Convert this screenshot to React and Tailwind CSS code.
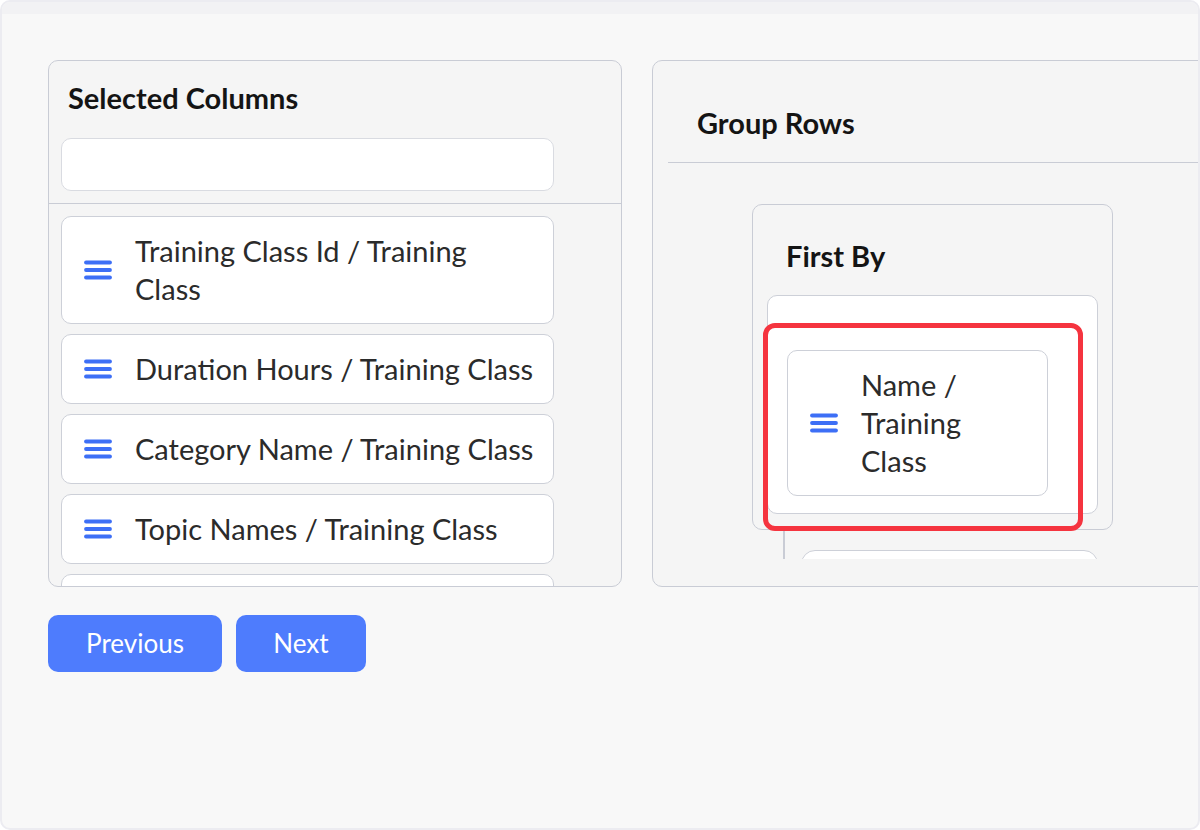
import React from "react";

const font = { fontFamily: "Lato, 'Open Sans', 'Liberation Sans', sans-serif" };

function DragHandle() {
  return (
    <svg width="28" height="20" viewBox="0 0 28 20" className="shrink-0">
      <g stroke="#3d6ff6" strokeWidth="3.8" strokeLinecap="round">
        <line x1="2" y1="2.5" x2="26" y2="2.5" />
        <line x1="2" y1="10" x2="26" y2="10" />
        <line x1="2" y1="17.5" x2="26" y2="17.5" />
      </g>
    </svg>
  );
}

function ColumnItem({ label }) {
  return (
    <div className="w-[493px] shrink-0 flex items-center gap-[23px] bg-white border border-[#cdd0d8] rounded-[10px] pl-[22px] pr-[17px] py-[15px]">
      <DragHandle />
      <span className="text-[29px] leading-[38px] text-[#2b2b2b]">{label}</span>
    </div>
  );
}

const columns = [
  "Training Class Id / Training Class",
  "Duration Hours / Training Class",
  "Category Name / Training Class",
  "Topic Names / Training Class",
  "Start Date / Training Class",
];

export default function App() {
  return (
    <div
      style={font}
      className="w-[1200px] h-[830px] overflow-hidden rounded-[10px] border-2 border-[#ececf1] bg-[#f8f8f8] flex flex-col"
    >
      <div className="h-[12px] bg-[#f2f2f4] shrink-0" />

      <div className="pl-[46px] pt-[46px] flex flex-col">
        <div className="flex gap-[30px]">
          {/* Selected columns */}
          <div className="w-[574px] h-[527px] shrink-0 overflow-hidden rounded-[10px] border border-[#c9ccd5] bg-[#f5f5f5] flex flex-col">
            <h2 className="pl-[19px] pt-[20px] text-[29px] leading-[34px] font-bold text-[#141414]">
              Selected Columns
            </h2>
            <div className="px-[12px] pt-[23px] pb-[12px] border-b border-[#c9ccd5]">
              <div className="w-[493px] h-[53px] bg-white border border-[#d9dbe1] rounded-[10px]" />
            </div>
            <div className="flex flex-col gap-[10px] px-[12px] pt-[12px]">
              {columns.map((c) => (
                <ColumnItem key={c} label={c} />
              ))}
            </div>
          </div>

          {/* Group rows */}
          <div className="w-[600px] h-[527px] shrink-0 overflow-hidden rounded-[10px] border border-[#c9ccd5] bg-[#f5f5f5] flex flex-col">
            <div className="ml-[15px] pl-[29px] pt-[46px] pb-[23px] border-b border-[#c9ccd5]">
              <h2 className="text-[29px] leading-[32px] font-bold text-[#141414]">Group Rows</h2>
            </div>
            <div className="h-[396px] overflow-hidden pl-[99px] pt-[41px]">
              <div className="relative w-[361px] h-[326px] rounded-[10px] border border-[#c9ccd5] bg-[#f5f5f5] flex flex-col">
                <h3 className="pl-[33px] pt-[35px] text-[29px] leading-[32px] font-bold text-[#141414]">
                  First By
                </h3>
                <div className="mx-[14px] mt-[23px] h-[219px] rounded-[10px] border border-[#cdd0d8] bg-white pl-[19px] pt-[54px]">
                  <div className="w-[261px] flex items-center gap-[23px] bg-white border border-[#cdd0d8] rounded-[10px] pl-[22px] pr-[20px] py-[15px]">
                    <DragHandle />
                    <span className="w-[150px] text-[29px] leading-[38px] text-[#2b2b2b]">
                      Name / Training Class
                    </span>
                  </div>
                </div>
                <div className="absolute left-[10px] top-[118px] w-[320px] h-[208px] rounded-[12px] border-[5px] border-[#f5343f]" />
              </div>
              <div className="ml-[31px] border-l-2 border-[#c9ccd5] pt-[20px] pl-[16px]">
                <div className="w-[297px] h-[80px] rounded-[14px] border border-[#cdd0d8] bg-white" />
              </div>
            </div>
          </div>
        </div>

        <div className="flex gap-[14px] mt-[28px]">
          <button className="w-[174px] h-[57px] rounded-[10px] bg-[#4e7cfd] text-white text-[26px]">
            Previous
          </button>
          <button className="w-[130px] h-[57px] rounded-[10px] bg-[#4e7cfd] text-white text-[26px]">
            Next
          </button>
        </div>
      </div>
    </div>
  );
}
